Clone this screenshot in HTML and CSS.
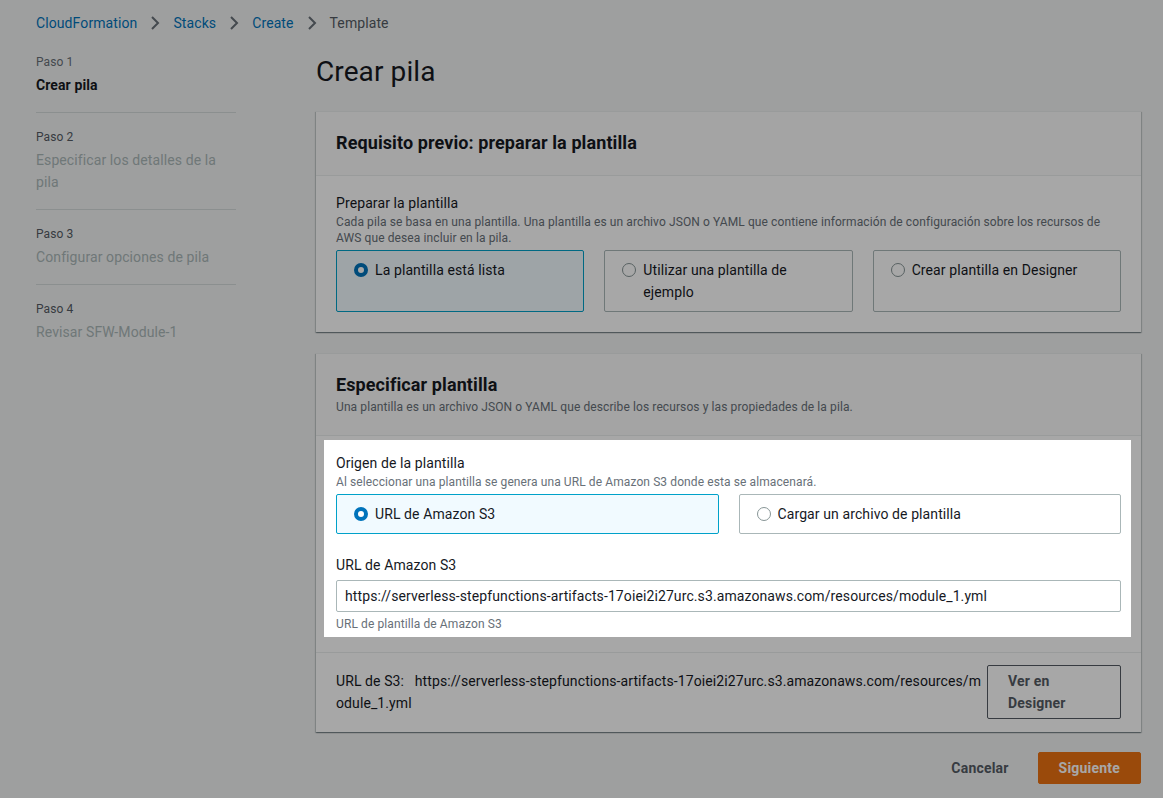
FILE: index.html
```html
<!DOCTYPE html>
<html lang="es">
<head>
<meta charset="utf-8">
<title>Crear pila</title>
<link rel="stylesheet" href="styles.css">
</head>
<body>
<div class="page">
  <nav class="crumbs">
    <a class="crumb-link">CloudFormation</a>
    <svg class="chev" viewBox="0 0 16 16" width="16" height="16"><path d="M5 2l6 6-6 6"/></svg>
    <a class="crumb-link">Stacks</a>
    <svg class="chev" viewBox="0 0 16 16" width="16" height="16"><path d="M5 2l6 6-6 6"/></svg>
    <a class="crumb-link">Create</a>
    <svg class="chev" viewBox="0 0 16 16" width="16" height="16"><path d="M5 2l6 6-6 6"/></svg>
    <span class="crumb-current">Template</span>
  </nav>

  <div class="layout">
    <aside class="steps">
      <div class="step">
        <div class="step-num first">Paso 1</div>
        <div class="step-title current">Crear pila</div>
      </div>
      <div class="step">
        <div class="step-num">Paso 2</div>
        <div class="step-title">Especificar los detalles de la pila</div>
      </div>
      <div class="step">
        <div class="step-num">Paso 3</div>
        <div class="step-title">Configurar opciones de pila</div>
      </div>
      <div class="step">
        <div class="step-num">Paso 4</div>
        <div class="step-title">Revisar SFW-Module-1</div>
      </div>
    </aside>

    <main class="main">
      <h1 class="page-title">Crear pila</h1>

      <section class="card">
        <header class="card-head">
          <h2 class="card-title">Requisito previo: preparar la plantilla</h2>
        </header>
        <div class="card-body">
          <div class="field-label">Preparar la plantilla</div>
          <div class="field-desc">Cada pila se basa en una plantilla. Una plantilla es un archivo JSON o YAML que contiene información de configuración sobre los recursos de AWS que desea incluir en la pila.</div>
          <div class="tiles tiles-3">
            <div class="tile selected"><span class="radio on"></span><span class="tile-text">La plantilla está lista</span></div>
            <div class="tile"><span class="radio"></span><span class="tile-text">Utilizar una plantilla de ejemplo</span></div>
            <div class="tile"><span class="radio"></span><span class="tile-text">Crear plantilla en Designer</span></div>
          </div>
        </div>
      </section>

      <section class="card">
        <header class="card-head">
          <h2 class="card-title">Especificar plantilla</h2>
          <div class="card-desc">Una plantilla es un archivo JSON o YAML que describe los recursos y las propiedades de la pila.</div>
        </header>
        <div class="card-body spot-wrap">
          <div class="spotlight">
            <div class="field-label">Origen de la plantilla</div>
            <div class="field-desc">Al seleccionar una plantilla se genera una URL de Amazon S3 donde esta se almacenará.</div>
            <div class="tiles tiles-2">
              <div class="tile tile-short selected"><span class="radio on"></span><span class="tile-text">URL de Amazon S3</span></div>
              <div class="tile tile-short"><span class="radio"></span><span class="tile-text">Cargar un archivo de plantilla</span></div>
            </div>
            <div class="field-label url-label">URL de Amazon S3</div>
            <div class="input">https://serverless-stepfunctions-artifacts-17oiei2i27urc.s3.amazonaws.com/resources/module_1.yml</div>
            <div class="field-hint">URL de plantilla de Amazon S3</div>
          </div>
        </div>
        <footer class="card-foot">
          <p class="s3-text">URL de S3:&nbsp;&nbsp; https://serverless-stepfunctions-artifacts-17oiei2i27urc.s3.amazonaws.com/resources/module_1.yml</p>
          <button class="btn btn-normal" type="button">Ver en Designer</button>
        </footer>
      </section>

      <div class="actions">
        <button class="btn btn-link" type="button">Cancelar</button>
        <button class="btn btn-primary" type="button">Siguiente</button>
      </div>
    </main>
  </div>
</div>
</body>
</html>
```

FILE: styles.css
```css
* { box-sizing: border-box; }

html, body {
  margin: 0;
  padding: 0;
  height: 100%;
  overflow: hidden;
}

body {
  background: #f2f3f3;
  color: #16191f;
  font-family: Roboto, "Liberation Sans", Arial, sans-serif;
  font-size: 14px;
  line-height: 22px;
  letter-spacing: 0.1px;
}

.page {
  padding: 12px 22px 0 36px;
}

/* breadcrumbs */
.crumbs {
  display: flex;
  align-items: center;
  gap: 8px;
  height: 22px;
}

.crumb-link {
  color: #0073bb;
  text-decoration: none;
}

.crumb-current {
  color: #545b64;
}

.chev {
  fill: none;
  stroke: #687078;
  stroke-width: 2;
  margin: 0 2px;
}

/* layout */
.layout {
  display: flex;
  gap: 80px;
  margin-top: 12px;
}

.steps {
  width: 200px;
  flex: none;
  padding-top: 8px;
}

.step {
  padding: 16px 0;
  border-bottom: 1px solid #d5dbdb;
}

.step:first-child {
  padding-top: 0;
}

.step:last-child {
  border-bottom: none;
}

.step-num {
  font-size: 12px;
  line-height: 16px;
  color: #545b64;
  margin-bottom: 4px;
}

.step-num.first {
  color: #687078;
}

.step-title {
  color: #aab7b8;
}

.step-title.current {
  color: #16191f;
  font-weight: 700;
}

.main {
  flex: 1;
  padding-top: 8px;
}

.page-title {
  margin: 0 0 21px;
  font-size: 28px;
  line-height: 36px;
  font-weight: 400;
  color: #16191f;
}

/* cards */
.card {
  background: #fff;
  border-top: 1px solid #eaeded;
  box-shadow: 0 1px 1px 0 rgba(0, 28, 36, .3), 1px 1px 1px 0 rgba(0, 28, 36, .15), -1px 1px 1px 0 rgba(0, 28, 36, .15);
  margin-bottom: 21px;
}

.card-head {
  background: #fafafa;
  border-bottom: 1px solid #eaeded;
  padding: 18px 20px 19px;
}

.card-title {
  margin: 0;
  font-size: 18px;
  line-height: 26px;
  font-weight: 700;
}

.card-desc {
  font-size: 12px;
  line-height: 16px;
  color: #687078;
  margin: 1px 0;
}

.card-body {
  padding: 16px 20px 20px;
}

.spot-wrap {
  padding: 4px 10px 15px 8px;
}

.spotlight {
  position: relative;
  z-index: 5;
  background: #fff;
  padding: 12px 10px 5px 12px;
  box-shadow: 0 0 0 4000px rgba(0, 0, 0, .345);
}

.field-label {
  color: #16191f;
}

.field-desc {
  font-size: 12px;
  line-height: 16px;
  color: #687078;
  margin-bottom: 4px;
}

.field-hint {
  font-size: 12px;
  line-height: 16px;
  color: #687078;
  margin-top: 4px;
}

.tiles {
  display: grid;
  gap: 20px;
}

.tiles-3 { grid-template-columns: repeat(3, 1fr); }
.tiles-2 { grid-template-columns: repeat(2, 1fr); }

.tile {
  display: flex;
  align-items: flex-start;
  gap: 7px;
  border: 1px solid #aab7b8;
  border-radius: 2px;
  padding: 8px 16px 8px 17px;
  min-height: 61px;
}

.tile.tile-short {
  min-height: 40px;
}

.tile.selected {
  background: #f1faff;
  border-color: #00a1c9;
}

.radio {
  flex: none;
  width: 14px;
  height: 14px;
  border-radius: 50%;
  border: 1px solid #879596;
  background: #fff;
  margin-top: 4px;
}

.radio.on {
  border: 4px solid #0073bb;
}

.url-label {
  margin-top: 20px;
  margin-bottom: 4px;
}

.input {
  border: 1px solid #aab7b8;
  border-radius: 2px;
  padding: 4px 8px;
  color: #16191f;
  white-space: nowrap;
  overflow: hidden;
}

.card-foot {
  border-top: 1px solid #eaeded;
  padding: 12px 20px 13px;
  display: flex;
  align-items: center;
}

.s3-text {
  flex: 1;
  min-width: 0;
  margin: 0;
  word-break: break-all;
}

.btn {
  font-family: inherit;
  font-size: 14px;
  line-height: 22px;
  font-weight: 700;
  letter-spacing: 0.2px;
  border-radius: 2px;
  padding: 4px 20px;
  cursor: pointer;
}

.btn-normal {
  flex: none;
  width: 134px;
  text-align: left;
  background: #fff;
  border: 1px solid #545b64;
  color: #545b64;
}

.actions {
  display: flex;
  justify-content: flex-end;
  gap: 8px;
  margin-top: -1px;
}

.btn-link {
  background: transparent;
  border: 1px solid transparent;
  color: #545b64;
}

.btn-primary {
  background: #ec7211;
  border: 1px solid #ec7211;
  color: #fff;
}
```
